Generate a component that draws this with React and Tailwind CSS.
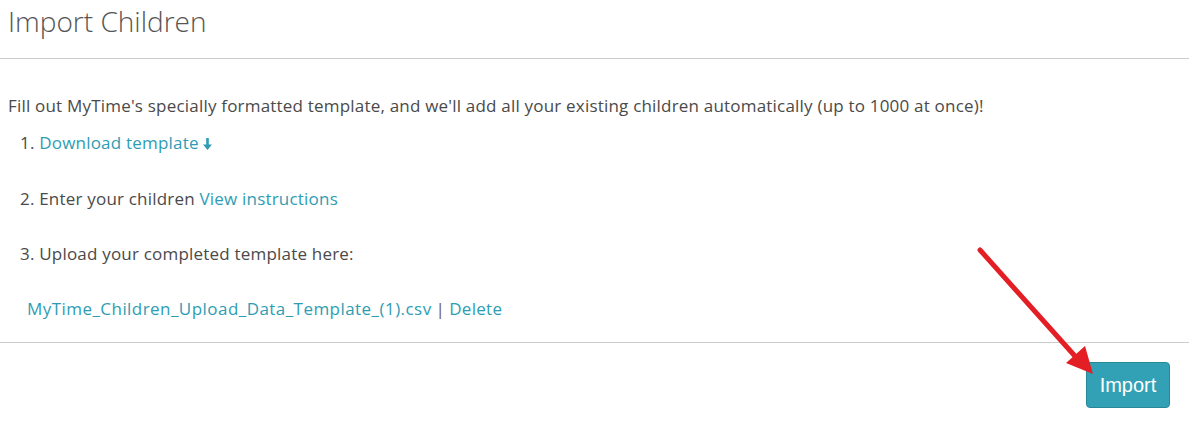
import { useState } from "react";

function DownArrow() {
  return (
    <svg className="ml-[4px] inline-block align-[-1px]" width="9" height="12" viewBox="0 0 9 12">
      <path d="M3.2 0h2.6v6.5H9L4.5 12 0 6.5h3.2z" fill="currentColor" />
    </svg>
  );
}

export default function App() {
  const [file, setFile] = useState("MyTime_Children_Upload_Data_Template_(1).csv");

  return (
    <div className="relative min-h-screen bg-white font-['Open_Sans',sans-serif] text-[#4a4a4a]">
      <div className="w-[1189px]">
        <header className="h-[59px] border-b border-[#cccccc] pl-[8px] pt-[1px]">
          <h1 className="text-[28px] font-light leading-[40px] text-[#555555]">
            Import Children
          </h1>
        </header>

        <main className="pl-[8px] pt-[35px] pb-[21px] text-[17px] leading-[24px] tracking-[0.2px]">
          <p>
            Fill out MyTime's specially formatted template, and we'll add all your
            existing children automatically (up to 1000 at once)!
          </p>
          <ol className="pl-[12px]">
            <li className="mt-[13px]">
              1.{" "}
              <a href="#" className="text-[#2e9db3]">
                Download template
                <DownArrow />
              </a>
            </li>
            <li className="mt-[32px]">
              2. Enter your children{" "}
              <a href="#" className="text-[#2e9db3]">
                View instructions
              </a>
            </li>
            <li className="mt-[31px]">3. Upload your completed template here:</li>
          </ol>
          {file && (
            <div className="mt-[31px] flex items-baseline gap-[4px] pl-[19px]">
              <a href="#" className="tracking-[0.45px] text-[#2e9db3]">
                {file}
              </a>
              <span className="text-[#6b5a4a]">|</span>
              <button onClick={() => setFile("")} className="tracking-[0.3px] text-[#2e9db3]">
                Delete
              </button>
            </div>
          )}
        </main>

        <footer className="flex justify-end border-t border-[#cccccc] pt-[19px] pr-[19px]">
          <button className="h-[46px] w-[84px] rounded-[4px] border border-[#27889a] bg-[#33a1b5] font-['Liberation_Sans',sans-serif] text-[20px] text-white">
            Import
          </button>
        </footer>
      </div>

      {/* red annotation arrow */}
      <svg
        className="pointer-events-none absolute left-0 top-0"
        width="1202"
        height="425"
        viewBox="0 0 1202 425"
      >
        <line x1="980" y1="250" x2="1074" y2="355" stroke="#e31e24" strokeWidth="5" strokeLinecap="round" />
        <polygon points="1066,363 1085,346 1093,374" fill="#e31e24" />
      </svg>
    </div>
  );
}
